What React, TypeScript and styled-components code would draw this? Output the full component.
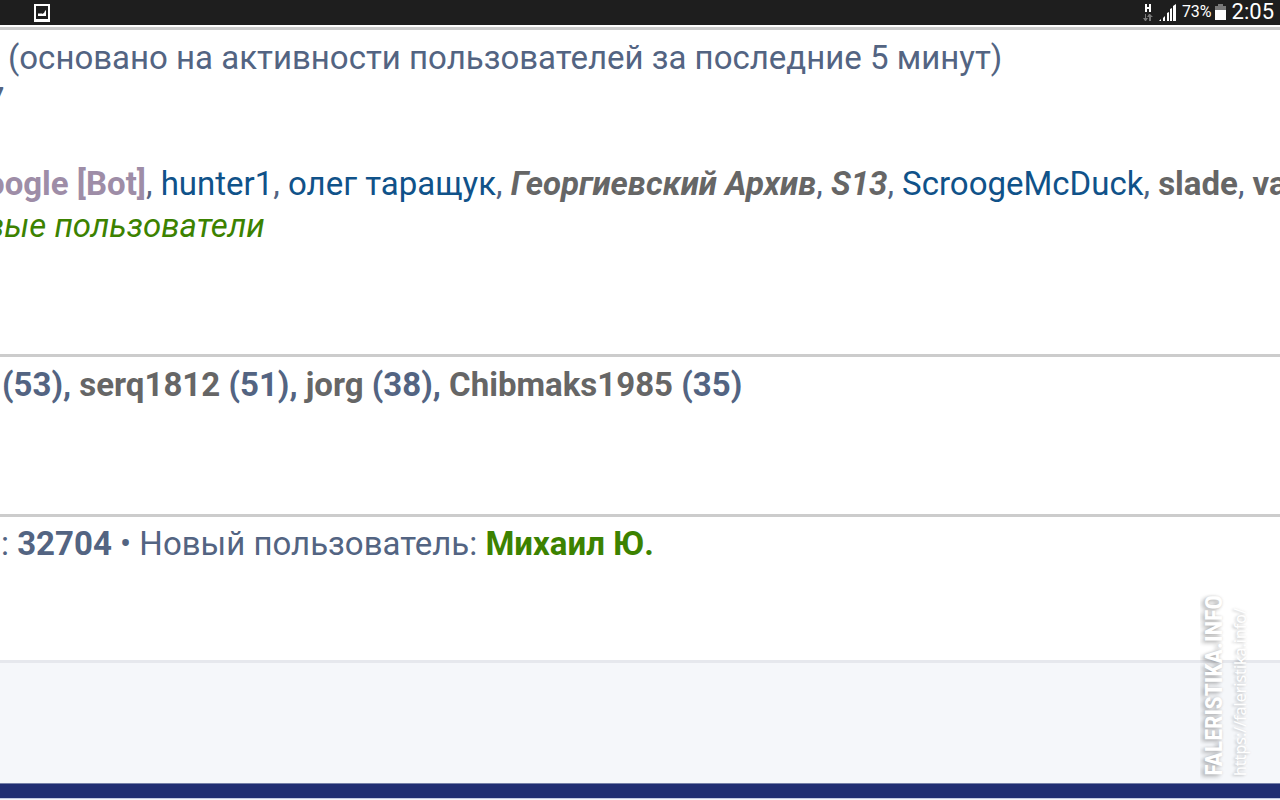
import React from "react";
import styled, { createGlobalStyle } from "styled-components";

const GlobalStyle = createGlobalStyle`
  * { box-sizing: border-box; }
  html, body, #root { height: 100%; }
  body {
    margin: 0;
    overflow: hidden;
    background: #fff;
    color: #536482;
    font-family: Roboto, "Noto Sans", sans-serif;
  }
`;

const Page = styled.div`
  position: relative;
  display: flex;
  flex-direction: column;
  min-height: 100%;
  overflow: hidden;
`;

const StatusBar = styled.header`
  display: flex;
  align-items: center;
  justify-content: space-between;
  height: 25px;
  margin-bottom: 2px;
  padding: 0 6px 0 34px;
  background: #1e1e1e;
  color: #fff;
`;

const StatusGroup = styled.div`
  display: flex;
  align-items: center;
  padding-bottom: 2px;
`;

const StatusIcon = styled.svg<{ $gap?: number }>`
  display: block;
  margin-right: ${(p) => p.$gap ?? 0}px;
`;

const Percent = styled.span`
  margin-right: 3px;
  font-size: 16px;
  line-height: 24px;
`;

const Clock = styled.time`
  font-size: 22px;
  line-height: 24px;
`;

const Section = styled.section<{ $top: number; $space: number }>`
  padding: ${(p) => p.$top}px 0 ${(p) => p.$space}px;
  border-top: 3px solid #ccc;
`;

const Line = styled.p<{ $shift: number; $bold?: boolean }>`
  min-height: 42px;
  margin: 0 0 0 ${(p) => p.$shift}px;
  font-size: 33px;
  line-height: 42px;
  font-weight: ${(p) => (p.$bold ? 700 : 400)};
  white-space: nowrap;
`;

const UserLink = styled.a<{ $color?: string; $bold?: boolean; $italic?: boolean }>`
  color: ${(p) => p.$color ?? "#105289"};
  font-weight: ${(p) => (p.$bold ? 700 : 400)};
  font-style: ${(p) => (p.$italic ? "italic" : "normal")};
  text-decoration: none;
`;

const Footer = styled.footer`
  display: flex;
  flex: 1;
  flex-direction: column;
  justify-content: flex-end;
  border-top: 3px solid #e6e8ed;
  border-bottom: 1px solid #f5f6fa;
  background: #f5f7fa;
`;

const FooterStripe = styled.div`
  height: 16px;
  border-top: 1px solid #7580a8;
  border-bottom: 1px solid #c3c9e0;
  background: #212e72;
`;

const Watermark = styled.div`
  position: absolute;
  right: 28px;
  bottom: 24px;
  display: flex;
  align-items: flex-end;
  color: #fff;
`;

const SiteName = styled.span`
  transform: rotate(180deg);
  writing-mode: vertical-rl;
  font-family: "Roboto Condensed", "Liberation Sans Narrow", sans-serif;
  font-size: 24px;
  font-weight: 700;
  line-height: 28px;
  text-shadow: -2px -3px 4px rgba(0, 0, 0, 0.3), 0 0 3px rgba(0, 0, 0, 0.15);
`;

const SiteUrl = styled.span`
  transform: rotate(180deg);
  writing-mode: vertical-rl;
  font-family: "Noto Sans", sans-serif;
  font-size: 16px;
  line-height: 24px;
  text-shadow: -1px -2px 3px rgba(0, 0, 0, 0.2), 0 0 3px rgba(0, 0, 0, 0.1);
`;

const GREY = "#666";
const GREEN = "#3c8200";

export default function App() {
  return (
    <>
      <GlobalStyle />
      <Page>
        <StatusBar>
          <StatusIcon width="16" height="18" viewBox="0 0 16 18">
            <path fill="#fff" fillRule="evenodd" d="M0 0h16v18H0zM2 2v13h12V2z" />
            <path fill="#fff" d="M4 12V10l1-1 1 1 1-1 1 1 2-1 1-2 1-1v6z" />
          </StatusIcon>
          <StatusGroup>
            <StatusIcon $gap={6} width="10" height="18" viewBox="0 0 10 18">
              <path fill="#fff" d="M2 1h2v3h2V1h2v8H6V6H4v3H2z" />
              <path fill="#777" d="M2 11h1v4h2l-2 3H2l-2-3h2zM6 11h1l3 3H8v4H6v-4H4z" />
            </StatusIcon>
            <StatusIcon $gap={6} width="17" height="18" viewBox="0 0 17 18">
              <path fill="#fff" d="M0 18l2-2v2zM4 15l2-2v5H4zM8 10l2-1v9H8zM11 6l2-1v13h-2zM14 3l3-2v17h-3z" />
            </StatusIcon>
            <Percent>73%</Percent>
            <StatusIcon $gap={6} width="11" height="16" viewBox="0 0 11 16">
              <path fill="#777" d="M3 0h5v2h3v4H0V2h3z" />
              <path fill="#fff" d="M0 6h11v10H0z" />
            </StatusIcon>
            <Clock>2:05</Clock>
          </StatusGroup>
        </StatusBar>

        <Section $top={7} $space={107}>
          <Line $shift={8}>(основано на активности пользователей за последние 5 минут)</Line>
          <Line $shift={-14}>7</Line>
          <Line $shift={0} />
          <Line $shift={-14}>
            <UserLink href="#" $color="#9e8da7" $bold>oogle [Bot]</UserLink>,{" "}
            <UserLink href="#">hunter1</UserLink>,{" "}
            <UserLink href="#">олег таращук</UserLink>,{" "}
            <UserLink href="#" $color={GREY} $bold $italic>Георгиевский Архив</UserLink>,{" "}
            <UserLink href="#" $color={GREY} $bold $italic>S13</UserLink>,{" "}
            <UserLink href="#">ScroogeMcDuck</UserLink>,{" "}
            <UserLink href="#" $color={GREY} $bold>slade</UserLink>,{" "}
            <UserLink href="#" $color={GREY} $bold>va</UserLink>
          </Line>
          <Line $shift={-14}>
            <UserLink href="#" $color={GREEN} $italic>вые пользователи</UserLink>
          </Line>
        </Section>

        <Section $top={7} $space={108}>
          <Line $shift={2} $bold>
            (53), <UserLink href="#" $color={GREY} $bold>serq1812</UserLink> (51),{" "}
            <UserLink href="#" $color={GREY} $bold>jorg</UserLink> (38),{" "}
            <UserLink href="#" $color={GREY} $bold>Chibmaks1985</UserLink> (35)
          </Line>
        </Section>

        <Section $top={6} $space={95}>
          <Line $shift={1}>
            : <strong>32704</strong> • Новый пользователь:{" "}
            <UserLink href="#" $color={GREEN} $bold>Михаил Ю.</UserLink>
          </Line>
        </Section>

        <Footer>
          <FooterStripe />
        </Footer>

        <Watermark>
          <SiteName>FALERISTIKA.INFO</SiteName>
          <SiteUrl>https://faleristika.info/</SiteUrl>
        </Watermark>
      </Page>
    </>
  );
}
